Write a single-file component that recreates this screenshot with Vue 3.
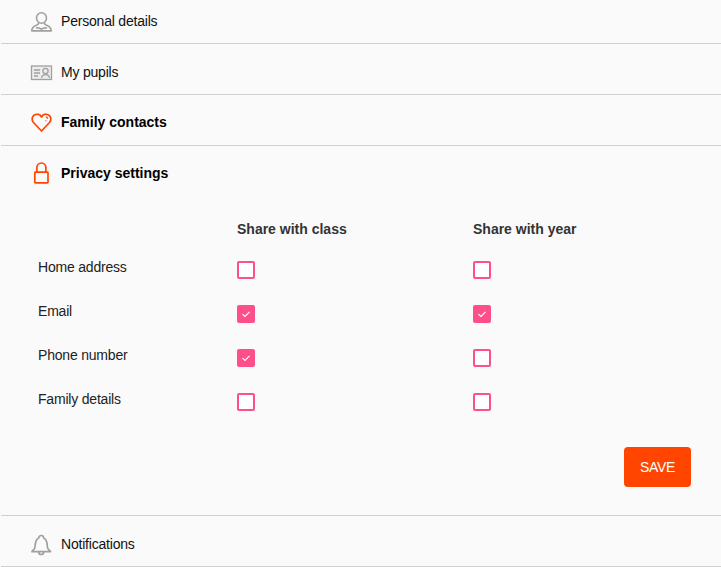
<script setup>
const rows = [
  { label: 'Home address', classShare: false, yearShare: false },
  { label: 'Email', classShare: true, yearShare: true },
  { label: 'Phone number', classShare: true, yearShare: false },
  { label: 'Family details', classShare: false, yearShare: false }
]
</script>

<template>
  <div class="page">
    <div class="item first">
      <svg class="icon" width="24" height="24" viewBox="0 0 24 24" fill="none" stroke="#a0a0a0" stroke-width="1.6">
        <ellipse cx="11.5" cy="9" rx="5" ry="5.3" />
        <path d="M8.500 14c.1 1.200-.6 1.800-2 2.300C4 17.200 2 18.300 1.700 21.700h19.600c-.3-3.400-2.300-4.500-4.800-5.400-1.400-.5-2.100-1.100-2-2.300" />
        <path d="M2 21.700h19M6 19c2.200-.4 4.200 0 5.500 1.300C12.800 19 14.800 18.600 17 19" />
      </svg>
      <span>Personal details</span>
    </div>
    <div class="item">
      <svg class="icon" width="24" height="24" viewBox="0 0 24 24" fill="none" stroke="#a0a0a0" stroke-width="1.3">
        <rect x="1.5" y="6" width="20" height="13.5" fill="#ececec" />
        <path d="M4 10h6M4 13h6M4 16h4" />
        <circle cx="15.5" cy="11" r="2.6" />
        <path d="M11.500 18c.3-2.300 2-3.300 4-3.300s3.700 1 4 3.300" />
      </svg>
      <span>My pupils</span>
    </div>
    <div class="item active">
      <svg class="icon" width="24" height="24" viewBox="0 0 24 24" fill="none" stroke="#ff4500" stroke-width="1.7">
        <path d="M11.500 21 3.500 12.500C1.300 10 1.800 6.500 4.300 5 7 3.500 10 4.300 11.500 7c1.500-2.700 4.500-3.500 7.200-2 2.500 1.500 3 5 .8 7.500Z" stroke-linejoin="round" />
        <path d="M15.800 6.800c1.100.2 1.800 1 1.800 2M15.500 10.500l.7.5" stroke-width="1.3" />
      </svg>
      <span>Family contacts</span>
    </div>
    <div class="item active no-line">
      <svg class="icon" width="24" height="24" viewBox="0 0 24 24" fill="none" stroke="#ff4500" stroke-width="1.7">
        <rect x="4.800" y="11.200" width="13.200" height="10.600" rx="0.6" />
        <path d="M6.900 11.200V6.500a4.500 4.500 0 0 1 9 0v4.700" />
      </svg>
      <span>Privacy settings</span>
    </div>

    <div class="privacy">
      <div class="grid head">
        <div></div>
        <div class="col-title">Share with class</div>
        <div class="col-title">Share with year</div>
      </div>
      <div v-for="row in rows" :key="row.label" class="grid line">
        <div class="row-label">{{ row.label }}</div>
        <div><span class="box" :class="{ on: row.classShare }"><svg v-if="row.classShare" width="10" height="10" viewBox="0 0 10 10" fill="none" stroke="#fff" stroke-width="1.1"><path d="M1.500 5.200 4 7.500 8.500 2.800" /></svg></span></div>
        <div><span class="box" :class="{ on: row.yearShare }"><svg v-if="row.yearShare" width="10" height="10" viewBox="0 0 10 10" fill="none" stroke="#fff" stroke-width="1.1"><path d="M1.500 5.200 4 7.500 8.500 2.800" /></svg></span></div>
      </div>
      <div class="actions">
        <button class="save">SAVE</button>
      </div>
    </div>

    <div class="item last">
      <svg class="icon" width="24" height="24" viewBox="0 0 24 24" fill="none" stroke="#a0a0a0" stroke-width="1.7">
        <path d="M1.900 19.700c.3-1.400 2.600-1.700 3-4 .5-3-.1-8 3.800-9.700a2.500 2.500 0 0 1 5 0c3.900 1.700 3.300 6.700 3.800 9.700.4 2.300 2.700 2.600 3 4Z" stroke-linejoin="round" />
        <path d="M8.700 20a2.500 2.500 0 0 0 5 0" />
      </svg>
      <span>Notifications</span>
    </div>
  </div>
</template>

<style>
body {
  background: #fafafa;
}
</style>

<style scoped>
.page {
  width: 721px;
  height: 567px;
  overflow: hidden;
  background: #fafafa;
  font-family: "Liberation Sans", Arial, sans-serif;
  font-size: 14px;
  letter-spacing: -0.2px;
  color: #111;
}

.item {
  display: flex;
  align-items: center;
  box-sizing: border-box;
  height: 51px;
  margin-left: 1px;
  padding: 5px 0 0 29px;
  border-bottom: 1px solid #cfcfcf;
}

.item.first {
  height: 44px;
  padding: 0 0 2px 29px;
}

.item.no-line {
  border-bottom: none;
  height: 50px;
}

.item.active {
  padding-top: 3px;
  font-weight: bold;
  letter-spacing: 0;
  color: #000;
}

.icon {
  flex: none;
  margin-right: 7px;
}

.privacy {
  box-sizing: border-box;
  height: 320px;
  margin-left: 1px;
  border-bottom: 1px solid #cfcfcf;
}

.grid {
  display: grid;
  grid-template-columns: 236px 236px 1fr;
}

.head {
  box-sizing: border-box;
  padding-top: 25px;
  height: 63px;
}

.col-title {
  color: #333;
  font-weight: bold;
  letter-spacing: 0;
}

.line {
  height: 44px;
}

.row-label {
  padding-left: 37px;
  color: #222;
}

.box {
  display: flex;
  align-items: center;
  justify-content: center;
  box-sizing: border-box;
  width: 18px;
  height: 18px;
  margin-top: 2px;
  background: #fff;
  border: 2px solid #ff4f8b;
  border-radius: 2px;
}

.box.on {
  background: #ff4f8b;
}

.actions {
  display: flex;
  justify-content: flex-end;
  padding: 12px 30px 0 0;
}

.save {
  width: 67px;
  height: 40px;
  border: none;
  border-radius: 4px;
  background: #ff4500;
  color: #fff;
  font-family: inherit;
  font-size: 14px;
  letter-spacing: -0.3px;
}
</style>
